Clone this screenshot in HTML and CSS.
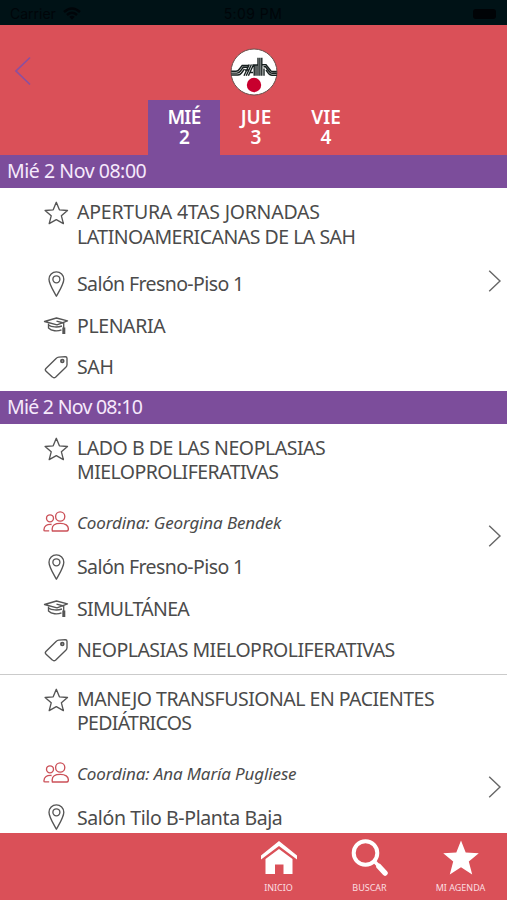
FILE: index.html
```html
<!DOCTYPE html>
<html lang="es">
<head>
<meta charset="utf-8">
<title>Agenda</title>
<link rel="stylesheet" href="styles.css">
</head>
<body>
<svg class="defs" width="0" height="0" aria-hidden="true">
  <symbol id="star" viewBox="0 0 26 26"><path d="M13.3 2.3 16.4 9.8 24.5 10.5 18.4 15.8 20.4 23.6 13.3 19.6 6.2 23.6 8.2 15.8 2.1 10.5 10.2 9.8Z"/></symbol>
  <symbol id="pin" viewBox="0 0 26 26"><path d="M13.4 25.2C10.2 19.3 6 13 6 8.2a7.4 7.4 0 0 1 14.8 0C20.8 13 16.6 19.3 13.4 25.2Z"/><circle cx="13.4" cy="8.3" r="3.5"/></symbol>
  <symbol id="cap" viewBox="0 0 26 26"><path d="M1.5 9.5 13.5 6 24.5 8.9 14 12.9Z"/><path d="M13.5 9.2 20.7 11V17M5.5 11.5v4.5c3 3.2 9 3.6 13 1.8M5.5 13c3 2.2 9 2.6 13.5 1"/><path d="M20.8 15.5v6.5" stroke-width="3"/></symbol>
  <symbol id="tag" viewBox="0 0 26 26"><path d="M2.9 14.4 13.1 4.5Q14.3 3.3 15.8 3.2L22.3 2.7Q24 2.7 24 4.2V10.7Q23.9 12.2 22.8 13.2L12.5 23.2Q10.8 24.5 9.3 22.9L3.1 17.2Q1.6 15.7 2.9 14.4Z"/><circle cx="19.3" cy="7" r="1.4" stroke-width="1.8"/></symbol>
  <symbol id="people" viewBox="0 0 26 26"><circle cx="17.2" cy="7.5" r="4.6"/><circle cx="7" cy="9.3" r="3.5"/><path d="M9.4 22C8 15.5 13 14.4 17.3 14.4S26.2 16 25.2 21Q25 22 23.5 22ZM8.6 15.5C4 15 1 17 .9 21Q.9 21.9 2 21.9H6.2"/></symbol>
  <symbol id="next" viewBox="0 0 14 24"><path d="M1.2 1.8 12 12 1.2 22.2"/></symbol>
</svg>
<div class="app">
  <div class="status">
    <div class="carrier"><span>Carrier</span>
      <svg width="18" height="13" viewBox="0 0 18 13"><path d="M1 5Q9-2 17 5M4 8Q9 3.7 14 8" fill="none" stroke="#000509" stroke-width="2.4"/><path d="M6.3 9.8Q9 7.8 11.7 9.8L9 12.7Z" fill="#000509"/></svg>
    </div>
    <span class="clock">5:09 PM</span>
    <div class="battery-box"><i class="battery"></i></div>
  </div>
  <header class="header">
    <div class="brand">
      <svg class="back" width="18" height="30" viewBox="0 0 18 30"><path d="M16 1.5 2 15 16 28.5"/></svg>
      <svg class="logo" width="48" height="48" viewBox="0 0 48 48">
        <circle cx="24" cy="24" r="23" fill="#fff" stroke="#67504c" stroke-width="1"/>
        <g fill="none" stroke="#17201f" stroke-width="1.4">
          <path d="M1.2 23.2H6Q8 23.2 9.5 21L12.2 17.5H19M1.2 25.1H7Q9 25 10.5 23L13.2 19.3H18M1.4 27H8Q10 27 11.5 25L14.5 21"/>
          <path d="M19.3 16.5 14 27.8M21.4 16.5 16.2 27.8M15 22H19.5M23.6 16.5 18.4 27.8M24.2 17V27.8M26 17V27.8M19.5 24.5H23M22.4 17H28"/>
          <path d="M28 27.8V9.8M29.9 27.8V9.8M31.8 27.8V9.8M32 16.8H36L41 23Q41.5 23.5 43 23.5H46.8M33.5 18.7H35.5L39.8 24.2Q40.4 25.3 42 25.3H46.8M34 27.8V20.5M36 22 38.8 25.8Q40 27.2 42 27.2H46.8"/>
        </g>
        <circle cx="24" cy="37" r="7.2" fill="#c8002e"/>
      </svg>
      <span></span>
    </div>
    <nav class="days">
      <div class="day active"><span>MIÉ</span><span>2</span></div>
      <div class="day"><span>JUE</span><span>3</span></div>
      <div class="day last"><span>VIE</span><span>4</span></div>
    </nav>
  </header>
  <main class="list">
    <h2 class="time">Mié 2 Nov 08:00</h2>
    <article class="item">
      <div class="info">
        <div class="title"><svg class="icon"><use href="#star"/></svg><p><span class="t1">APERTURA 4TAS JORNADAS</span><br><span class="t2">LATINOAMERICANAS DE LA SAH</span></p></div>
        <div class="row"><svg class="icon"><use href="#pin"/></svg><span class="place">Salón Fresno-Piso 1</span></div>
        <div class="row"><svg class="icon"><use href="#cap"/></svg><span class="plen">PLENARIA</span></div>
        <div class="row"><svg class="icon"><use href="#tag"/></svg><span class="plen">SAH</span></div>
      </div>
      <svg class="next"><use href="#next"/></svg>
    </article>
    <h2 class="time ten">Mié 2 Nov 08:10</h2>
    <article class="item tall">
      <div class="info">
        <div class="title"><svg class="icon"><use href="#star"/></svg><p><span class="t3">LADO B DE LAS NEOPLASIAS</span><br><span class="t4">MIELOPROLIFERATIVAS</span></p></div>
        <div class="row people"><svg class="icon"><use href="#people"/></svg><em>Coordina: Georgina Bendek</em></div>
        <div class="row"><svg class="icon"><use href="#pin"/></svg><span class="place">Salón Fresno-Piso 1</span></div>
        <div class="row"><svg class="icon"><use href="#cap"/></svg><span class="simul">SIMULTÁNEA</span></div>
        <div class="row"><svg class="icon"><use href="#tag"/></svg><span class="t2">NEOPLASIAS MIELOPROLIFERATIVAS</span></div>
      </div>
      <svg class="next"><use href="#next"/></svg>
    </article>
    <article class="item tall ruled">
      <div class="info">
        <div class="title"><svg class="icon"><use href="#star"/></svg><p><span class="t2">MANEJO TRANSFUSIONAL EN PACIENTES</span><br><span class="simul">PEDIÁTRICOS</span></p></div>
        <div class="row people"><svg class="icon"><use href="#people"/></svg><em>Coordina: Ana María Pugliese</em></div>
        <div class="row"><svg class="icon"><use href="#pin"/></svg><span class="plen">Salón Tilo B-Planta Baja</span></div>
      </div>
      <svg class="next"><use href="#next"/></svg>
    </article>
  </main>
  <footer class="tabs">
    <div class="tab"><svg width="38" height="38" viewBox="0 0 38 38"><path d="M1 17.5 19 3 37 17.5V21.5L19 8 1 21.5ZM5.5 21 19 11 32.5 21V36H23.5V26.5H15V36H5.5Z"/></svg><span>INICIO</span></div>
    <div class="tab"><svg width="38" height="38" viewBox="0 0 38 38"><circle cx="14.5" cy="15" r="11.8" fill="none" stroke="#fff" stroke-width="4"/><path d="M23 23 34 34.5" stroke="#fff" stroke-width="3.5"/><path d="M28 28.5 34 35" stroke="#fff" stroke-width="5.5" stroke-linecap="round"/></svg><span class="search">BUSCAR</span></div>
    <div class="tab"><svg width="38" height="38" viewBox="0 0 38 38"><path d="M19 2.5 23.7 14.5 36.8 15.2 26.8 23.5 30.2 36.5 19 29.3 7.8 36.5 11.2 23.5 1.2 15.2 14.3 14.5Z"/></svg><span class="agenda">MI AGENDA</span></div>
  </footer>
</div>
</body>
</html>
```
FILE: styles.css
```css
* { box-sizing: border-box; }
body { margin: 0; font-family: "Noto Sans", sans-serif; color: #4b4b4b; background: #fff; }
.defs { display: block; }
.app { width: 507px; height: 900px; display: flex; flex-direction: column; overflow: hidden; }
.status { flex: none; height: 25px; padding: 2px 11px 0 10px; background: #001216; color: #000509; display: grid; grid-template-columns: 1fr auto 1fr; align-items: center; font: 14px "Inter", sans-serif; }
.clock { letter-spacing: 0.45px; }
.carrier { display: flex; align-items: center; gap: 7px; }
.battery-box { display: flex; justify-content: flex-end; }
.battery { width: 23px; height: 10px; border-radius: 3px; background: #000306; }
.header { flex: none; height: 130px; background: #da5058; display: flex; flex-direction: column; justify-content: space-between; }
.brand { margin-top: 23px; display: grid; grid-template-columns: 1fr 48px 1fr; align-items: center; padding: 0 14px 0 14px; }
.back { fill: none; stroke: #8a50a0; stroke-width: 1.7; margin-top: -3px; }
.logo { display: block; }
.days { display: flex; padding-left: 148px; }
.day { width: 72px; height: 55px; padding-top: 7px; display: flex; flex-direction: column; align-items: center; color: #fff; font-size: 19px; font-weight: 600; line-height: 20px; }
.day.last { width: 68px; }
.active { background: #7c4d9b; letter-spacing: -0.7px; }
.list { flex: 1; min-height: 0; overflow: hidden; }
.time { margin: 0; height: 33px; padding-left: 7px; background: #7c4d9b; color: #f6e9fb; font-size: 19.5px; font-weight: 400; line-height: 31px; letter-spacing: -0.45px; white-space: nowrap; }
.ten { letter-spacing: -0.73px; }
.item { display: flex; justify-content: space-between; align-items: flex-start; padding: 12px 5px 3px 43px; }
.ruled { border-top: 1.5px solid #cbcbcb; }
.info { font-size: 19.5px; white-space: nowrap; }
.title { display: flex; gap: 8px; margin-bottom: 14px; }
.title p { margin: 0; line-height: 24.5px; }
.row { height: 41.6px; display: flex; align-items: center; gap: 8px; }
.people { height: 47px; font-size: 17px; letter-spacing: -0.13px; }
.t1 { letter-spacing: -0.23px; }
.t2 { letter-spacing: -0.5px; }
.t3 { letter-spacing: -0.46px; }
.t4 { letter-spacing: -0.55px; }
.place { letter-spacing: -0.6px; }
.plen { letter-spacing: -0.39px; }
.simul { letter-spacing: -0.71px; }
.icon { flex: none; width: 26px; height: 26px; fill: none; stroke: #555; stroke-width: 1.35; stroke-linejoin: round; }
.people .icon { stroke: #cb5058; }
.next { flex: none; width: 14px; height: 24px; fill: none; stroke: #666; stroke-width: 1.4; margin-top: 69px; }
.tall .next { margin-top: 88px; }
.tabs { flex: none; height: 67px; background: #da5058; padding-left: 233px; display: grid; grid-template-columns: repeat(3, 91px); }
.tab { display: flex; flex-direction: column; align-items: center; padding-top: 5px; color: #fbdfe0; font-size: 9px; line-height: 12px; white-space: nowrap; }
.tab svg { fill: #fff; margin-bottom: 6px; }
```
